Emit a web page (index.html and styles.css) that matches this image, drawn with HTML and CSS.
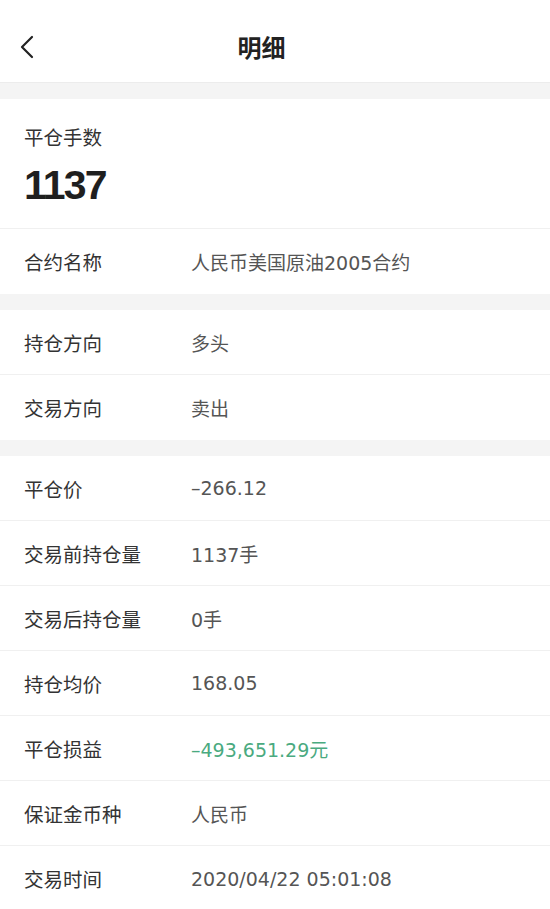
FILE: index.html
```html
<!DOCTYPE html>
<html lang="zh">
<head>
<meta charset="utf-8">
<title>明细</title>
<link rel="stylesheet" href="styles.css">
</head>
<body>
<div class="page">
  <header class="nav">
    <div class="back">
      <svg width="16" height="24" viewBox="0 0 16 24"><path d="M13 2 L3 12 L13 22" fill="none" stroke="#222" stroke-width="2.2" stroke-linecap="round" stroke-linejoin="round"/></svg>
    </div>
    <h1 class="title">明细</h1>
    <div class="spacer"></div>
  </header>

  <section class="group">
    <div class="summary">
      <div class="summary-label">平仓手数</div>
      <div class="summary-value">1137</div>
    </div>
    <div class="row"><span class="label">合约名称</span><span class="value">人民币美国原油2005合约</span></div>
  </section>

  <section class="group">
    <div class="row"><span class="label">持仓方向</span><span class="value">多头</span></div>
    <div class="row"><span class="label">交易方向</span><span class="value">卖出</span></div>
  </section>

  <section class="group">
    <div class="row"><span class="label">平仓价</span><span class="value">–266.12</span></div>
    <div class="row"><span class="label">交易前持仓量</span><span class="value">1137手</span></div>
    <div class="row"><span class="label">交易后持仓量</span><span class="value">0手</span></div>
    <div class="row"><span class="label">持仓均价</span><span class="value">168.05</span></div>
    <div class="row"><span class="label">平仓损益</span><span class="value loss">–493,651.29元</span></div>
    <div class="row"><span class="label">保证金币种</span><span class="value">人民币</span></div>
    <div class="row"><span class="label">交易时间</span><span class="value">2020/04/22 05:01:08</span></div>
  </section>
</div>
</body>
</html>
```

FILE: styles.css
```css
* { box-sizing: border-box; }
html, body {
  margin: 0;
  padding: 0;
  background: #f4f4f4;
  font-family: "Noto Sans CJK SC", "Noto Sans", sans-serif;
}
.page {
  width: 550px;
  height: 909px;
  overflow: hidden;
  display: flex;
  flex-direction: column;
  gap: 16px;
}
.nav {
  height: 83px;
  flex-shrink: 0;
  background: #fff;
  display: grid;
  grid-template-columns: 60px 1fr 60px;
  align-items: center;
  border-bottom: 1px solid #ececec;
}
.back {
  padding-left: 19px;
  display: flex;
  align-items: center;
  padding-top: 12px;
}
.title {
  margin: 0;
  text-align: center;
  font-size: 24px;
  font-weight: 700;
  color: #222;
  padding-right: 27px;
  padding-top: 11px;
}
.group {
  background: #fff;
  flex-shrink: 0;
}
.summary {
  height: 130px;
  padding: 23px 24px 0;
  border-bottom: 1px solid #f0f0f0;
}
.summary-label {
  font-size: 19.5px;
  color: #333;
  line-height: 30px;
}
.summary-value {
  font-family: "Liberation Sans", "Noto Sans", sans-serif;
  font-size: 41px;
  font-weight: 700;
  color: #1f1f1f;
  letter-spacing: -1.8px;
  line-height: 48px;
  margin-top: 9px;
}
.row {
  height: 65px;
  display: flex;
  align-items: center;
  padding-left: 24px;
  border-bottom: 1px solid #f0f0f0;
}
.row:last-child { border-bottom: none; }
.label {
  width: 167px;
  font-size: 19.5px;
  color: #333;
}
.value {
  font-family: "DejaVu Sans", "Noto Sans CJK SC", sans-serif;
  font-size: 19px;
  color: #555;
}
.value.loss {
  color: #4aaa80;
}
```
